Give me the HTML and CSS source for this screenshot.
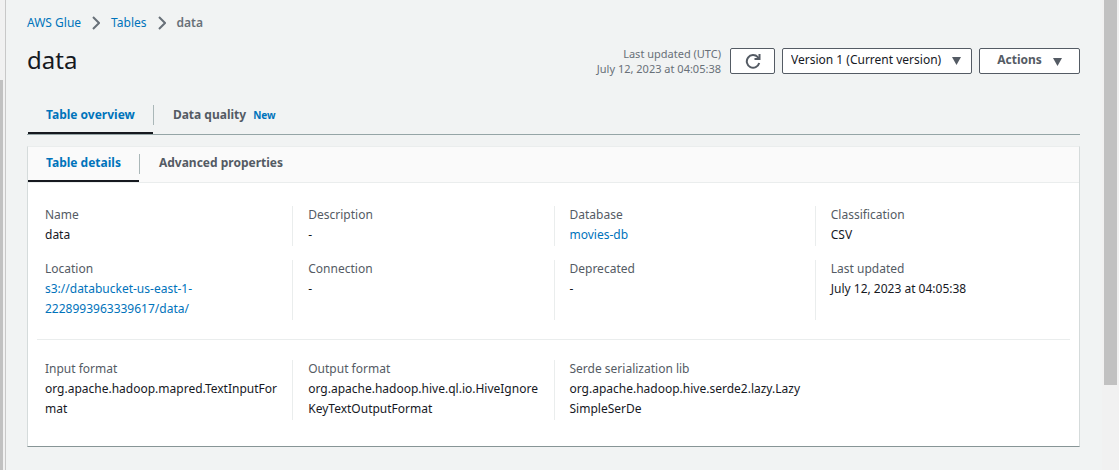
FILE: index.html
```html
<!DOCTYPE html>
<html lang="en">
<head>
<meta charset="utf-8">
<meta name="viewport" content="width=device-width, initial-scale=1">
<title>data - AWS Glue</title>
<link rel="stylesheet" href="styles.css">
</head>
<body>
<div class="shell">
  <div class="nav-edge"><div class="nav-thumb"></div></div>
  <main class="main">
    <nav class="crumbs" aria-label="Breadcrumb">
      <a href="#">AWS Glue</a>
      <svg class="chevron" viewBox="0 0 8 14" aria-hidden="true"><path d="M1 1l6 6-6 6"/></svg>
      <a href="#">Tables</a>
      <svg class="chevron" viewBox="0 0 8 14" aria-hidden="true"><path d="M1 1l6 6-6 6"/></svg>
      <span class="current">data</span>
    </nav>
    <header class="header">
      <h1>data</h1>
      <div class="tools">
        <p class="updated">Last updated (UTC)<br>July 12, 2023 at 04:05:38</p>
        <button class="btn refresh" type="button" aria-label="Refresh">
          <svg viewBox="0 0 16 16" aria-hidden="true"><path class="stroke" d="M14.2 10A6.300 6.300 0 1 1 12.800 4.200L14 5.400"/><path class="stroke" d="M14.500 1v5H9.500"/></svg>
        </button>
        <div class="picker">
          <select aria-label="Version"><option>Version 1 (Current version)</option></select>
          <svg class="caret" viewBox="0 0 9 8" aria-hidden="true"><path d="M0 0h9L4.500 8z"/></svg>
        </div>
        <button class="btn actions" type="button">Actions <svg class="caret" viewBox="0 0 9 8" aria-hidden="true"><path d="M0 0h9L4.500 8z"/></svg></button>
      </div>
    </header>
    <div class="tabs page-tabs" role="tablist">
      <button class="tab active" role="tab" aria-selected="true">Table overview</button>
      <button class="tab" role="tab" aria-selected="false">Data quality <span class="new">New</span></button>
    </div>
    <section class="card">
      <div class="tabs card-tabs" role="tablist">
        <button class="tab active" role="tab" aria-selected="true">Table details</button>
        <button class="tab" role="tab" aria-selected="false">Advanced properties</button>
      </div>
      <div class="details">
        <dl class="grid">
          <div class="cell"><dt>Name</dt><dd>data</dd></div>
          <div class="cell"><dt>Description</dt><dd>-</dd></div>
          <div class="cell"><dt>Database</dt><dd><a href="#">movies-db</a></dd></div>
          <div class="cell"><dt>Classification</dt><dd>CSV</dd></div>
          <div class="cell"><dt>Location</dt><dd><a href="#">s3://databucket-us-east-1-<br>2228993963339617/data/</a></dd></div>
          <div class="cell"><dt>Connection</dt><dd>-</dd></div>
          <div class="cell"><dt>Deprecated</dt><dd>-</dd></div>
          <div class="cell"><dt>Last updated</dt><dd>July 12, 2023 at 04:05:38</dd></div>
        </dl>
        <hr>
        <dl class="grid">
          <div class="cell"><dt>Input format</dt><dd>org.apache.hadoop.mapred.TextInputFor<br>mat</dd></div>
          <div class="cell"><dt>Output format</dt><dd>org.apache.hadoop.hive.ql.io.HiveIgnore<br>KeyTextOutputFormat</dd></div>
          <div class="cell"><dt>Serde serialization lib</dt><dd>org.apache.hadoop.hive.serde2.lazy.Lazy<br>SimpleSerDe</dd></div>
        </dl>
      </div>
    </section>
  </main>
  <div class="scrollbar"><div class="thumb"></div></div>
</div>
</body>
</html>
```
FILE: styles.css
```css
* { box-sizing: border-box; }
body {
  margin: 0;
  background: #f1f3f3;
  color: #16191f;
  font: 12px/20px "Noto Sans", "Open Sans", sans-serif;
}
a { color: #0073bb; text-decoration: none; }
h1, p, dl, dd { margin: 0; }
button, select { font: inherit; color: inherit; }

.shell { display: flex; min-height: 100vh; }
.nav-edge {
  flex: none;
  width: 6px;
  padding-top: 80px;
  display: flex;
  background: #f1f1f1;
  border-right: 1px solid #c8c8c8;
}
.nav-thumb { width: 3px; background: #c1c1c1; }
.main { flex: 1; min-width: 0; padding: 13px 22px 24px 21px; }
.scrollbar { flex: none; width: 17px; padding: 0 2px; background: #f1f1f1; }
.thumb { height: 82vh; background: #c1c1c1; }

.crumbs { display: flex; align-items: center; gap: 11px; }
.chevron { width: 8px; height: 14px; fill: none; stroke: #687078; stroke-width: 2; }
.current { color: #687078; font-weight: 600; }

.header { display: flex; justify-content: space-between; align-items: center; margin-top: 12px; }
h1 { font-size: 24px; line-height: 30px; font-weight: 400; padding-bottom: 2px; }
.tools { display: flex; align-items: center; gap: 7px; }
.updated { color: #687078; font-size: 11px; line-height: 15px; text-align: right; margin-right: 2px; }
.btn, .picker select {
  height: 26px;
  border: 1px solid #545b64;
  border-radius: 2px;
  background: #fff;
  color: #545b64;
}
.btn { display: flex; align-items: center; justify-content: center; padding: 0; font-weight: 700; }
.refresh { width: 45px; }
.refresh svg { width: 16px; height: 16px; }
.stroke { fill: none; stroke: #545b64; stroke-width: 2; }
.actions { width: 101px; gap: 11px; padding-bottom: 2px; }
.caret { width: 9px; height: 8px; fill: #545b64; }
.actions .caret { margin-top: 3px; }
.picker { position: relative; }
.picker select { appearance: none; width: 190px; padding: 0 24px 2px 8px; color: #16191f; }
.picker .caret { position: absolute; right: 11px; top: 9px; pointer-events: none; }

.tabs { display: flex; }
.tab {
  display: flex;
  align-items: center;
  gap: 7px;
  position: relative;
  padding: 0 18px;
  border: 0;
  background: none;
  color: #545b64;
  font-weight: 700;
}
.tab + .tab { padding-left: 20px; }
.tab.active { color: #0073bb; }
.tab.active::before {
  content: "";
  position: absolute;
  inset: auto 0 0 0;
  height: 2px;
  background: #16191f;
}
.tab.active::after {
  content: "";
  position: absolute;
  right: -1px;
  width: 1px;
  height: 20px;
  background: #aab7b8;
}
.page-tabs { margin-top: 18px; padding-left: 1px; border-bottom: 1px solid #95a5a6; }
.page-tabs .tab { height: 39px; }
.new { color: #0073bb; font-size: 10px; }

.card {
  margin-top: 11px;
  background: #fff;
  border: 1px solid #d5dbdb;
  border-top-color: #eaeded;
  border-bottom-color: #879596;
}
.card-tabs { background: #fafafa; border-bottom: 1px solid #eaeded; }
.card-tabs .tab { height: 35px; padding-bottom: 4px; }
.card-tabs .tab.active::after { top: 7px; }
.details { padding: 23px 3px 26px; }
.grid { display: grid; grid-template-columns: repeat(4, minmax(0, 1fr)); row-gap: 14px; }
.cell { padding: 0 0 0 15px; border-left: 1px solid #eaeded; }
.cell:nth-child(4n + 1) { border-color: transparent; padding-left: 13px; }
dt { color: #545b64; margin-top: -1px; }
dd { margin-bottom: 1px; overflow-wrap: break-word; }
hr { margin: 19px 6px 20px; border: 0; border-top: 1px solid #eaeded; }
```
